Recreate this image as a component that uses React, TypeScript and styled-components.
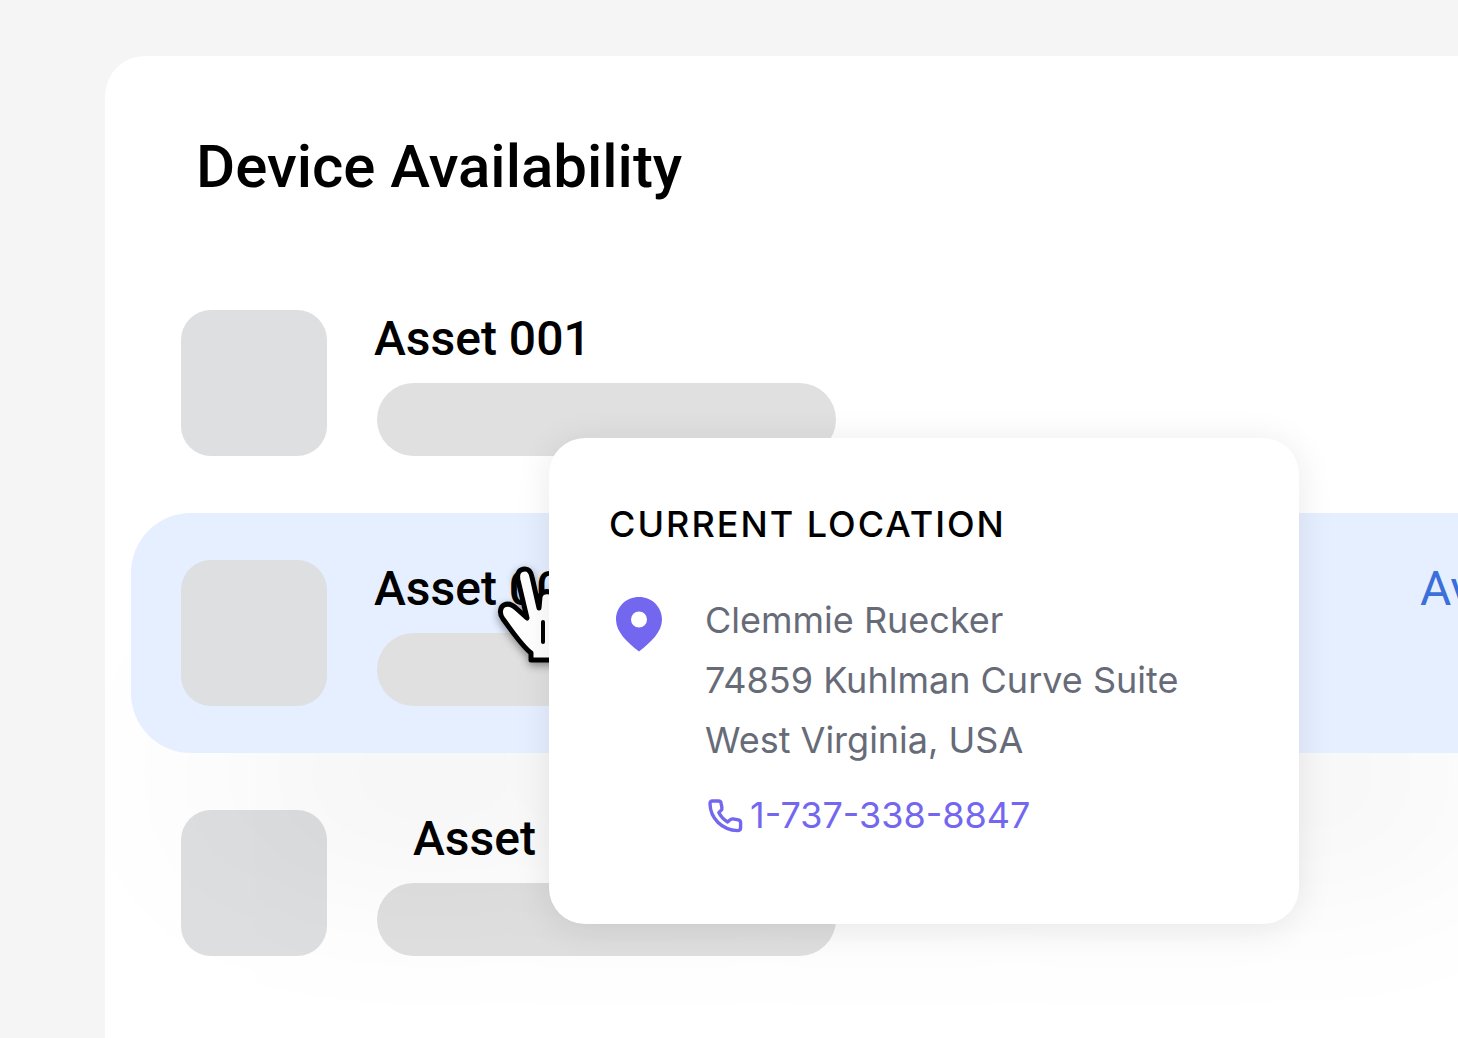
import React from "react";
import styled, { createGlobalStyle, css } from "styled-components";

const GlobalStyle = createGlobalStyle`
  *, *::before, *::after { box-sizing: border-box; }
  body {
    margin: 0;
    background: #f5f5f5;
    color: #000;
    font-family: Roboto, "Liberation Sans", sans-serif;
  }
`;

const Page = styled.main`
  min-height: 100vh;
  display: flex;
  padding: 56px 0 0 105px;
`;

const Panel = styled.section`
  flex: 1;
  min-width: 0;
  overflow: hidden;
  padding: 75px 0 32px 26px;
  background: #fff;
  border-radius: 40px 0 0 0;
`;

const Title = styled.h1`
  margin: 0 0 60px;
  padding-left: 65px;
  font-size: 60px;
  line-height: 72px;
  font-weight: 500;
`;

const AssetList = styled.ul`
  display: flex;
  flex-direction: column;
  gap: 10px;
  margin: 0 -100px 0 0;
  padding: 0;
  list-style: none;
`;

const AssetRow = styled.li<{ $active?: boolean }>`
  position: relative;
  display: flex;
  gap: 47px;
  padding: 47px 50px;
  border-radius: 60px;
  ${({ $active }) =>
    $active &&
    css`
      z-index: 1;
      background: #e6efff;
      box-shadow: 0 140px 220px -100px rgba(0, 0, 0, 0.24);
    `}
`;

const Thumbnail = styled.div`
  flex: none;
  width: 146px;
  height: 146px;
  border-radius: 30px;
  background: #dddfe0;
`;

const AssetInfo = styled.div`
  flex: 1;
  display: flex;
  flex-direction: column;
  justify-content: space-between;
`;

const AssetHead = styled.div<{ $indented?: boolean }>`
  display: flex;
  justify-content: space-between;
  padding-left: ${({ $indented }) => ($indented ? "39px" : "0")};
  font-size: 48px;
  line-height: 58px;
`;

const AssetName = styled.h2`
  margin: 0;
  font: inherit;
  font-weight: 500;
`;

const Status = styled.span`
  width: 138px;
  flex: none;
  margin-right: -50px;
  color: #3b6fd9;
  white-space: nowrap;
`;

const Placeholder = styled.div`
  width: 459px;
  height: 73px;
  margin-left: 3px;
  border-radius: 37px;
  background: #e0e0e0;
`;

const Cursor = styled.svg`
  position: absolute;
  left: 366px;
  top: 52px;
  width: 80px;
  height: 100px;
  filter: drop-shadow(0 3px 4px rgba(0, 0, 0, 0.4));
`;

const Popover = styled.aside`
  position: absolute;
  left: 418px;
  top: -75px;
  width: 750px;
  padding: 59px 60px 79px;
  border-radius: 36px;
  background: #fff;
  box-shadow: 0 4px 36px rgba(0, 0, 0, 0.09);
  font-family: Inter, "Liberation Sans", sans-serif;
  font-size: 36px;
`;

const PopoverTitle = styled.h3`
  margin: 0 0 39px;
  font-size: 36px;
  line-height: 54px;
  font-weight: 500;
  letter-spacing: 2px;
`;

const Location = styled.div`
  display: flex;
  gap: 38px;
`;

const Pin = styled.svg`
  flex: none;
  width: 58px;
  height: 70px;
`;

const Details = styled.div`
  display: flex;
  flex-direction: column;
  align-items: flex-start;
  gap: 15px;
`;

const Address = styled.address`
  color: #676b78;
  font-style: normal;
  line-height: 60px;
`;

const AddressLine = styled.span`
  display: block;
`;

const PhoneLink = styled.a`
  display: flex;
  align-items: center;
  gap: 5px;
  color: #7367f0;
  line-height: 60px;
  text-decoration: none;
`;

const PhoneIcon = styled.svg`
  width: 40px;
  height: 40px;
`;

function HandCursor() {
  return (
    <Cursor viewBox="0 0 80 100" aria-hidden="true">
      <path
        d="M34 95V88C24 80 15 66 6 54C2 49 3 42 7 40C11 38 16 40 20 44L30 53L21 15C19.500 7 23 4 28 4C32 4 34 7 35 12L42 43L43 32C44 27 48 26 53 27L66 30L78 40V95Z"
        fill="#fff"
        stroke="#000"
        strokeWidth="5"
        strokeLinejoin="round"
      />
      <path d="M46 57V77" stroke="#000" strokeWidth="4" strokeLinecap="round" />
    </Cursor>
  );
}

function LocationPopover() {
  return (
    <Popover aria-label="Current location">
      <PopoverTitle>CURRENT LOCATION</PopoverTitle>
      <Location>
        <Pin viewBox="0 0 58 70" aria-hidden="true">
          <path
            fill="#7367f0"
            fillRule="evenodd"
            d="M30 7C17 7 7 17 7 29.500C7 42 18 52 30 61.500C42 52 53 42 53 29.500C53 17 43 7 30 7ZM30 21.500a8 8 0 1 1 0 16a8 8 0 0 1 0-16Z"
          />
        </Pin>
        <Details>
          <Address>
            <AddressLine>Clemmie Ruecker</AddressLine>
            <AddressLine>74859 Kuhlman Curve Suite</AddressLine>
            <AddressLine>West Virginia, USA</AddressLine>
          </Address>
          <PhoneLink href="tel:1-737-338-8847">
            <PhoneIcon
              viewBox="6 5 40 40"
              fill="none"
              stroke="currentColor"
              strokeWidth="3.4"
              strokeLinejoin="round"
              aria-hidden="true"
            >
              <path d="M13.500 11H19.500Q21.800 11 22.100 13.200L22.900 17.600Q23.200 19.300 22 20.400L19.800 22.600C21.800 26.600 25 29.900 28.600 32L31.200 29.800Q32.300 28.600 33.900 28.900L39.300 29.900Q41.600 30.400 41.600 32.700V37.600Q41.600 40.600 38.600 40.600C23 40 11.300 28.500 11 13.800Q11 11 13.500 11Z" />
            </PhoneIcon>
            1-737-338-8847
          </PhoneLink>
        </Details>
      </Location>
    </Popover>
  );
}

type Asset = { name: string; status?: string; active?: boolean; indented?: boolean };

const assets: Asset[] = [
  { name: "Asset 001" },
  { name: "Asset 002", status: "Available", active: true },
  { name: "Asset 003", indented: true },
];

export default function App() {
  return (
    <>
      <GlobalStyle />
      <Page>
        <Panel>
          <Title>Device Availability</Title>
          <AssetList>
            {assets.map((asset) => (
              <AssetRow key={asset.name} $active={asset.active}>
                <Thumbnail />
                <AssetInfo>
                  <AssetHead $indented={asset.indented}>
                    <AssetName>{asset.name}</AssetName>
                    {asset.status && <Status>{asset.status}</Status>}
                  </AssetHead>
                  <Placeholder />
                </AssetInfo>
                {asset.active && <HandCursor />}
                {asset.active && <LocationPopover />}
              </AssetRow>
            ))}
          </AssetList>
        </Panel>
      </Page>
    </>
  );
}
